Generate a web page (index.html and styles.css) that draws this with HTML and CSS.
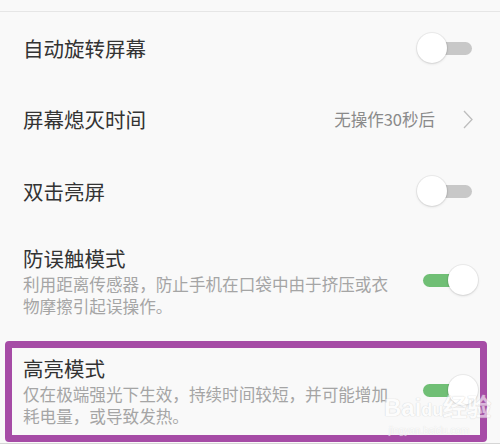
FILE: index.html
```html
<!DOCTYPE html>
<html lang="zh-CN">
<head>
  <meta charset="UTF-8" />
  <meta name="viewport" content="width=device-width, initial-scale=1.0"/>
  <title>显示设置</title>
  <link rel="stylesheet" href="styles.css">
</head>
<body>
  <div class="top-gap"></div>

  <div class="settings">
    <div class="row row-first">
      <div class="label">自动旋转屏幕</div>
      <div class="toggle"><span class="track"></span><span class="knob"></span></div>
    </div>

    <div class="row row-link">
      <div class="label">屏幕熄灭时间</div>
      <div class="value">无操作30秒后</div>
      <svg class="chevron" width="10" height="19" viewBox="0 0 10 19">
        <path d="M1 1 L9 9.5 L1 18" fill="none" stroke="#bdbdbd" stroke-width="1.3"/>
      </svg>
    </div>

    <div class="row">
      <div class="label">双击亮屏</div>
      <div class="toggle"><span class="track"></span><span class="knob"></span></div>
    </div>

    <div class="row row-tall">
      <div class="text">
        <div class="label">防误触模式</div>
        <div class="desc">利用距离传感器，防止手机在口袋中由于挤压或衣物摩擦引起误操作。</div>
      </div>
      <div class="toggle on"><span class="track"></span><span class="knob"></span></div>
    </div>

    <div class="highlight">
      <div class="row row-boxed">
        <div class="text">
          <div class="label">高亮模式</div>
          <div class="desc">仅在极端强光下生效，持续时间较短，并可能增加耗电量，或导致发热。</div>
        </div>
        <div class="toggle on"><span class="track"></span><span class="knob"></span></div>
      </div>
    </div>
    <div class="bottom-line"></div>
  </div>

  <div class="watermark">
    <div class="wm-logo">Bai<span class="wm-paw">du</span>经验</div>
    <div class="wm-url">jingyan.baidu.com</div>
  </div>
</body>
</html>
```

FILE: styles.css
```css
body {
  margin: 0;
  background-color: #f9f9f9;
  font-family: "Noto Sans CJK SC", "Noto Sans", sans-serif;
  color: #333;
  overflow: hidden;
}

.top-gap {
  height: 11px;
  border-bottom: 1px solid #e6e6e6;
}

.settings {
  position: relative;
}

.row {
  display: flex;
  align-items: center;
  height: 72px;
  padding: 0 28px 0 23px;
  box-sizing: border-box;
}

.row-first {
  height: 71px;
}

.row-tall {
  height: 111px;
  padding-top: 17px;
  padding-bottom: 22px;
}

.label {
  font-size: 20.5px;
  line-height: 28px;
  color: #333;
  flex: 1;
}

.text {
  flex: 1;
}

.desc {
  font-size: 16.6px;
  line-height: 22px;
  color: #a5a5a5;
  width: 372px;
  margin-top: 1px;
}

.value {
  font-size: 16.5px;
  color: #8a8a8a;
  margin-right: 28px;
}

.chevron {
  display: block;
  margin-right: -1px;
}

.toggle {
  position: relative;
  width: 49px;
  height: 30px;
  flex-shrink: 0;
}

.track {
  position: absolute;
  left: 0;
  right: 0;
  top: 9px;
  height: 13px;
  border-radius: 7px;
  background-color: #c8c8c8;
}

.knob {
  position: absolute;
  top: 0;
  left: -6px;
  width: 30px;
  height: 30px;
  border-radius: 50%;
  background-color: #fff;
  box-shadow: 0 0 0 1px rgba(0,0,0,0.05), 0 1px 3px rgba(0,0,0,0.12);
}

.toggle.on .track {
  background-color: #70bf75;
}

.toggle.on .knob {
  left: auto;
  right: -6px;
}

.highlight {
  margin: 3px 13px 0 5px;
  border: 7px solid #a64ca6;
  border-radius: 4px;
}

.row-boxed {
  height: auto;
  padding: 6px 8px 8px 11px;
}

.row-boxed .toggle {
  margin-top: -2px;
}

.bottom-line {
  height: 1px;
  margin-top: 1px;
  background-color: #d6d6d6;
}

.watermark {
  position: absolute;
  left: 384px;
  top: 394px;
  width: 90px;
  text-align: center;
  opacity: 0.6;
  pointer-events: none;
}

.wm-logo {
  font-family: "Liberation Sans", sans-serif;
  font-size: 24px;
  font-weight: bold;
  line-height: 27px;
  color: #fff;
  white-space: nowrap;
  text-shadow: 0 0 1px #c4c4c4, 0 0 1px #c4c4c4;
}

.wm-paw {
  font-size: 18px;
}

.wm-url {
  font-family: "Liberation Sans", sans-serif;
  font-size: 10px;
  line-height: 13px;
  color: #fff;
  text-shadow: 0 0 1px #c0c0c0;
}
```
